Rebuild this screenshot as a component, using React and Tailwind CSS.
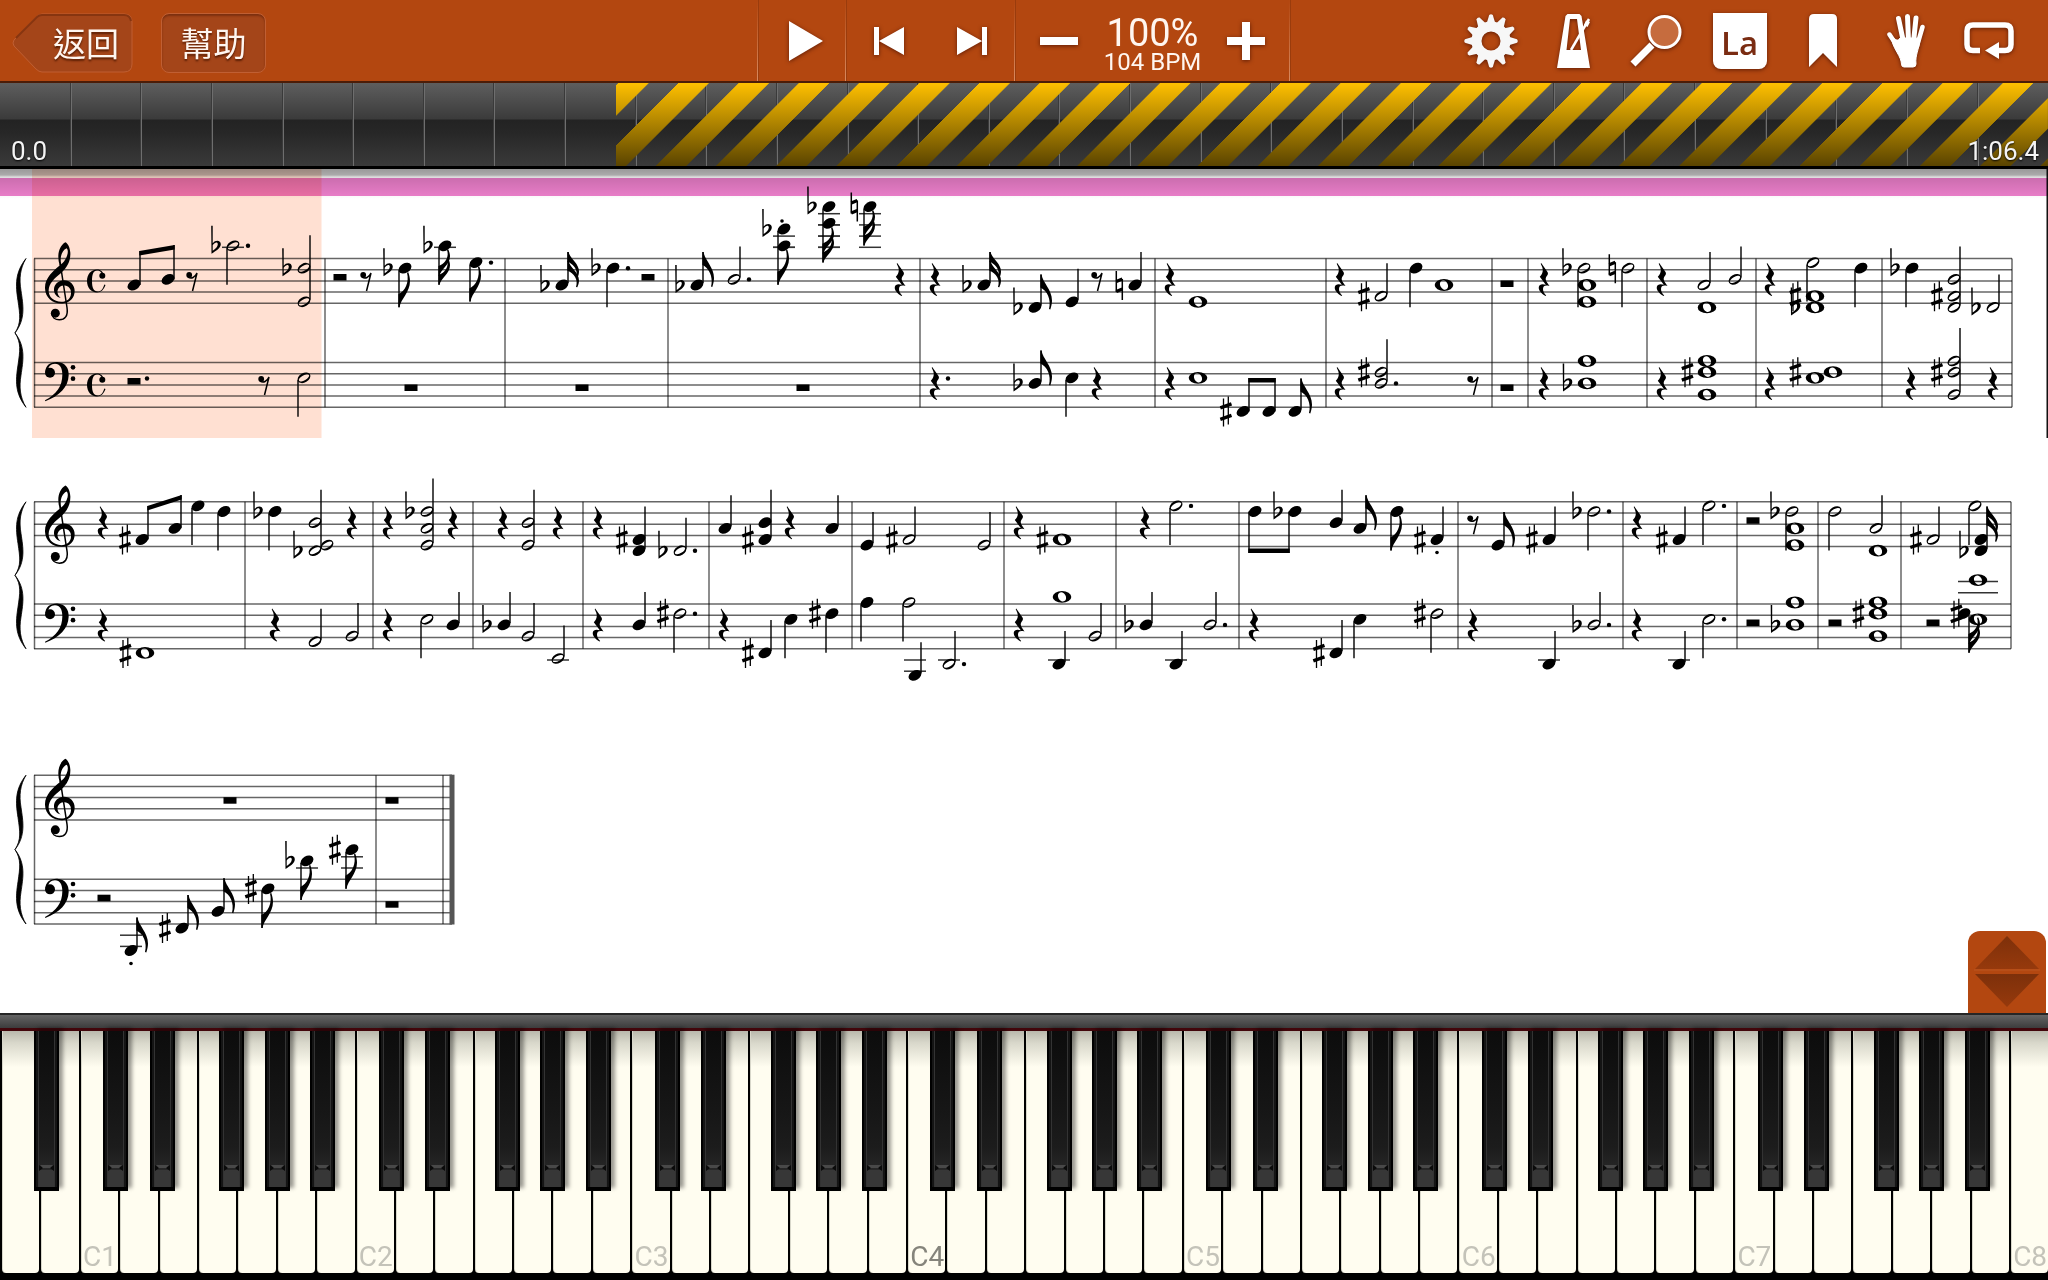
import { useState } from 'react';

// One event per entry: kind, x, steps (0 = top line, 8 = bottom line, with b/#/n), stem, extras
// kinds: w h q e s = whole..sixteenth, o = hollow head, n = solid head, r1 r2 r4 r8 = rests
// extras: . = dotted, ! = staccato above, ? = staccato below, - = stem only
const SYSTEMS = [
  {
    treble: 258.5,
    bass: 362.5,
    end: 2012,
    time: true,
    bars: [325, 505, 668, 920, 1155, 1326, 1492, 1528, 1647, 1756, 1882, 2012],
    trebleEvents:
      'r8 192;h 233 -2b d .;h 304 2b,8 u;' +
      'r2 340;r8 366;e 405 2b d;s 445 -2b d;e 476 1 d .;' +
      's 562 5b u;q 613 2b d .;r2 648;' +
      'e 697 5b u;h 734 4 u .;e 784 -5b,-2 d !;s 829 -9b,-6 d;s 870 -9n d;r4 900;' +
      'r4 935;s 984 5b u;e 1035 9b u;q 1072 8 u;r8 1097;q 1135 5n u;' +
      'r4 1170;w 1198 8;' +
      'r4 1340;h 1381 7# u;q 1416 2 d;w 1444 5;r1 1507;' +
      'r4 1544;h 1584 2b d;w 1587 5,8;h 1628 2n d;' +
      'r4 1662;h 1704 5 u;w 1707 9;h 1735 4 u;' +
      'r4 1770;h 1813 1 d;w 1815 7#,9b;q 1861 2 d;' +
      'q 1912 2b d;h 1954 4,7#,9 u;h 1993 9b u',
    bassEvents:
      'r2 134 .;r8 264;h 304 3 d;r1 411;r1 582;r1 803;' +
      'r4 935 .;e 1035 4b u;q 1072 3 d;r4 1097;' +
      'r4 1170;w 1198 3;e 1295 9 u;' +
      'r4 1340;h 1381 2#,4 u .;r8 1473;r1 1507;' +
      'r4 1544;w 1587 0,4b;r4 1662;w 1707 0,2#,6;' +
      'r4 1770;w 1815 3;w 1833 2;a 1815 2#;' +
      'r4 1911;h 1954 0,2#,6 u;r4 1993',
    beams: [
      { staff: 'treble', notes: [[134, '5'], [168, '4']], up: true, y: [251, 245] },
      { staff: 'bass', notes: [[1243, '9#'], [1269, '9']], up: true, y: [378, 378] },
    ],
  },
  {
    treble: 501.8,
    bass: 604,
    end: 2011,
    bars: [245, 373, 473, 583, 709, 852, 1004, 1116, 1239, 1458, 1623, 1737, 1818, 1901, 2011],
    trebleEvents:
      'r4 103;q 198 1 d;q 224 2 d;' +
      'q 275 2b d;h 315 4,9b u;o 327 8;r4 352;' +
      'r4 388;h 427 2b,5,8 u;r4 453;r4 503;h 528 4,8 u;r4 558;' +
      'r4 598;q 639 7#,9 u;h 680 9b u .;' +
      'q 725 5 u;q 765 4,7# u;r4 790;q 832 5 u;' +
      'q 867 8 u;h 909 7# u;h 984 8 u;r4 1019;w 1062 7#;' +
      'r4 1145;h 1176 1 d .;' +
      'q 1336 4 u;e 1360 5 u;e 1397 2 d;q 1437 7# u ?;' +
      'r8 1473;e 1498 8 u;q 1549 7# u;h 1594 2b d .;' +
      'r4 1637;q 1679 7# u;h 1709 1 d .;' +
      'r2 1753;h 1792 2b d;w 1795 5,8;' +
      'h 1835 2 d;h 1876 5 u;w 1878 9;' +
      'h 1933 7# u;h 1975 1 d;s 1981 7,9b u',
    bassEvents:
      'r4 103;w 145 9#;r4 275;h 315 7 u;h 352 6 u;' +
      'r4 388;h 427 3 d;q 453 4 u;q 504 4b u;h 528 6 u;h 558 10 u;' +
      'r4 598;q 639 4 u;h 680 2# d .;' +
      'r4 724;q 765 9# u;q 791 3 d;q 832 2# d;' +
      'q 867 0 d;h 909 0 d;q 915 13 u;h 949 11 u .;' +
      'r4 1019;w 1062 -1;q 1059 11 u;h 1095 6 u;' +
      'q 1146 4b u;q 1176 11 u;h 1210 4 u .;' +
      'r4 1254;q 1336 9# u;q 1360 3 d;h 1437 2# d;' +
      'r4 1473;q 1549 11 u;h 1594 4b u .;' +
      'r4 1637;q 1679 11 u;h 1709 3 d .;' +
      'r2 1753;w 1795 0,4b;r2 1835;w 1878 0,2#,6;' +
      'r2 1933;w 1978 -4,3;n 1964 2;a 1976 2#;s 1975 2 d -',
    beams: [
      { staff: 'treble', notes: [[142, '7#'], [175, '5']], up: true, y: [506, 495] },
      { staff: 'treble', notes: [[1255, '2'], [1295, '2b']], up: false, y: [553, 553] },
    ],
  },
  {
    treble: 775.2,
    bass: 879.2,
    end: 452,
    final: true,
    bars: [376, 443],
    trebleEvents: 'r1 230;r1 392',
    bassEvents:
      'r2 104;e 131 13 u ?;e 182 9# u;e 218 6 u;e 268 2# d;e 307 -3b d;e 352 -5# d;r1 392',
    beams: [],
  },
];

const HALF_GAP = 5.6;
const HEAD_LIFT = 1.5;

function parseEvents(source) {
  return source.split(';').map((entry) => {
    const [kind, x, ...rest] = entry.split(' ');
    const isRest = kind[0] === 'r';
    const notes = isRest ? [] : rest[0].split(',').map(parseNote);
    const extras = isRest ? rest : rest.slice(1);
    return { kind, x: Number(x), notes, extras };
  });
}

function parseNote(text) {
  const mark = text.match(/[b#n]$/);
  return { step: parseInt(text, 10), accidental: mark ? mark[0] : null };
}

function Accidental({ type, x, y }) {
  return (
    <g transform={`translate(${x} ${y})`}>
      {type === 'b' && (
        <path
          fillRule="evenodd"
          d="M-21.8-20h1.5v17.5C-17.500-6.500-12-5.500-12.200-1.500C-12.400 2.500-17 5-21.500 8ZM-20.300-.5V5C-17.500 3-15.200 1-15.200-1.500C-15.200-4-18-4-20.300-.5Z"
        />
      )}
      {type === '#' && (
        <>
          <path d="M-19.500-13V15M-14.700-15V13" stroke="#000" strokeWidth="1.3" />
          <path d="M-22.700-3.500L-11.500-7.500M-22.700 8L-11.500 4" stroke="#000" strokeWidth="3.4" />
        </>
      )}
      {type === 'n' && (
        <>
          <path d="M-18.700-14V7M-12.700-6V15" stroke="#000" strokeWidth="1.5" />
          <path d="M-18.700-3.500L-12.700-6M-18.700 6.500L-12.700 4" stroke="#000" strokeWidth="3.2" />
        </>
      )}
    </g>
  );
}

function Head({ kind, x, y }) {
  if (kind === 'w') {
    return (
      <path
        transform={`translate(${x} ${y})`}
        fillRule="evenodd"
        d="M-9.300 0a9.300 5.900 0 1 0 18.600 0a9.300 5.900 0 1 0-18.600 0M-2.400-4.200A4.850 3.500 60 1 0 2.400 4.200A4.850 3.500 60 1 0-2.400-4.200"
      />
    );
  }
  if (kind === 'h' || kind === 'o') {
    return (
      <path
        transform={`translate(${x} ${y}) rotate(-30)`}
        fillRule="evenodd"
        d="M-6.900 0a6.900 4.700 0 1 0 13.800 0a6.900 4.700 0 1 0-13.800 0M-5.800 0a5.800 2.500 0 1 0 11.600 0a5.800 2.500 0 1 0-11.600 0"
      />
    );
  }
  return <ellipse transform={`translate(${x} ${y}) rotate(-30)`} rx="6.900" ry="4.800" />;
}

function Rest({ kind, x, top }) {
  if (kind === 'r1') return <rect x={x - 6.5} y={top + 22} width="13" height="6.5" />;
  if (kind === 'r2') return <rect x={x - 6.5} y={top + 15.5} width="13" height="6.5" />;
  if (kind === 'r8') {
    return (
      <g transform={`translate(${x - 6} ${top + 13})`}>
        <circle cx="3.2" cy="3.5" r="2.9" />
        <path
          d="M2 5.6C5.500 7.500 9 6 11 1.500L6.500 19.500"
          fill="none"
          stroke="#000"
          strokeWidth="1.5"
        />
      </g>
    );
  }
  return (
    <path
      transform={`translate(${x - 6} ${top + 4.5})`}
      d="M3.200 0L9.500 9C10.300 10.500 10 11.500 8.800 13C6.800 15.800 7.500 17.500 11.500 23C7.500 21.800 5 22.800 5 26C5 28.500 6.200 30.500 8.200 32.500L7.500 33C3 30.300.3 27 .8 24C1.300 21 4.500 20.600 7.800 21.800L1.800 13.800C5.800 9.500 5.500 6 2.700.8Z"
    />
  );
}

function Flag({ x, y, up, small }) {
  return (
    <path
      transform={`translate(${x} ${y}) scale(1 ${(up ? 1 : -1) * (small ? 0.75 : 1)})`}
      d="M-.6 0H.6C1.500 8 11 15 11 26C11 29 10.300 32 9.300 35L8 34.500C10.500 25 6 16-.6 13Z"
    />
  );
}

function Ledgers({ x, step, top, wide }) {
  const lines = [];
  for (let s = -2; s >= step; s -= 2) lines.push(s);
  for (let s = 10; s <= step; s += 2) lines.push(s);
  const reach = wide ? 20 : 11;
  return lines.map((s) => (
    <path
      key={s}
      d={`M${x - reach} ${top + s * HALF_GAP}h${reach * 2}`}
      stroke="#333"
      strokeWidth="1.5"
    />
  ));
}

function Event({ event, top }) {
  const { kind, x, notes, extras } = event;
  const dotted = extras.includes('.');

  if (kind[0] === 'r') {
    return (
      <>
        <Rest kind={kind} x={x} top={top} />
        {dotted && <circle cx={x + 13} cy={top + 16} r="2.2" />}
      </>
    );
  }

  const yOf = (step) => top + step * HALF_GAP - HEAD_LIFT;
  const steps = notes.map((n) => n.step);
  const high = Math.min(...steps);
  const low = Math.max(...steps);
  const up = extras.includes('u');
  const hasStem = 'hqes'.includes(kind);
  const stemX = up ? x + 6 : x - 6;
  const tip = up ? yOf(high) - 33 : yOf(low) + 39;
  const hasHead = kind !== 'a' && !extras.includes('-');

  return (
    <>
      {notes.map((note) => (
        <g key={note.step}>
          {hasHead && <Ledgers x={x} step={note.step} top={top} wide={kind === 'w'} />}
          {hasHead && <Head kind={kind} x={x} y={yOf(note.step)} />}
          {note.accidental && (
            <Accidental
              type={note.accidental}
              x={kind === 'w' || kind === 'a' ? x - 2.5 : x}
              y={yOf(note.step)}
            />
          )}
        </g>
      ))}
      {hasStem && (
        <path
          d={`M${stemX} ${up ? yOf(low) - 2 : yOf(high) + 2}V${tip}`}
          stroke="#000"
          strokeWidth="1.4"
        />
      )}
      {(kind === 'e' || kind === 's') && <Flag x={stemX} y={tip} up={up} small={kind === 's'} />}
      {kind === 's' && <Flag x={stemX} y={tip + (up ? 9 : -9)} up={up} small />}
      {dotted && <circle cx={x + 15} cy={yOf(low)} r="2.2" />}
      {extras.includes('!') && <circle cx={x - 2} cy={yOf(high) - 8} r="1.8" />}
      {extras.includes('?') && <circle cx={x} cy={yOf(low) + 13} r="1.8" />}
    </>
  );
}

function Beam({ beam, top }) {
  const offset = beam.up ? 6 : -6;
  const thick = beam.up ? 4.5 : -4.5;
  const [a, b] = beam.notes.map(([x]) => x + offset);
  const [ya, yb] = beam.y;
  return (
    <>
      {beam.notes.map(([x, text], i) => {
        const { step, accidental } = parseNote(text);
        const y = top + step * HALF_GAP - HEAD_LIFT;
        return (
          <g key={x}>
            <Head kind="q" x={x} y={y} />
            {accidental && <Accidental type={accidental} x={x} y={y} />}
            <path d={`M${x + offset} ${y}V${beam.y[i]}`} stroke="#000" strokeWidth="1.4" />
          </g>
        );
      })}
      <path d={`M${a - 0.7} ${ya}L${b + 0.7} ${yb}v${thick}L${a - 0.7} ${ya + thick}Z`} />
    </>
  );
}

function TrebleClef({ y }) {
  return (
    <g transform={`translate(45 ${y - 16}) scale(.3333) translate(-135 -27)`}>
      <path
        fillRule="evenodd"
        d="M196 26C176 38 170 66 179 96C160 112 134 134 135 164C136 194 160 212 188 210C210 208 224 194 224 172C224 154 210 140 192 140C174 140 161 154 162 170C163 183 171 190 182 193C174 186 171 178 173 170C176 160 184 155 194 156C206 157 214 166 213 180C212 196 200 205 184 205C160 204 145 190 146 170C147 150 162 136 184 118C202 102 212 82 211 58C210 42 204 30 196 26ZM200 44C207 52 203 68 192 84L184 92C179 76 183 52 200 44Z"
      />
      <path
        d="M181 92L201 222C205 248 194 259 178 259C166 259 156 252 155 240"
        fill="none"
        stroke="#000"
        strokeWidth="4.5"
      />
      <circle cx="166" cy="239" r="13.5" />
    </g>
  );
}

function BassClef({ y }) {
  return (
    <g transform={`translate(45 ${y - 0.5}) scale(.3333) translate(-135 -386)`}>
      <path d="M136 416C136 396 152 385 172 386C196 387 207 405 206 426C205 462 178 488 136 504L135 501C170 482 187 458 187 424C187 404 180 391 165 391C152 391 144 400 144 412Z" />
      <circle cx="150" cy="418" r="15" />
      <circle cx="219" cy="402" r="7" />
      <circle cx="219" cy="436" r="7" />
    </g>
  );
}

function CommonTime({ y }) {
  return (
    <g transform={`translate(87 ${y + 11})`}>
      <path d="M17.500 6C15.500 1.500 13 0 10 0C4 0 0 5 0 11.500C0 18 4 23 10 23C14 23 17 20 18.500 15.500L17.300 15C16 19.500 14 22 11 22C6.500 22 5 18 5 11.500C5 5 6.500 1 10 1C12 1 13 1.500 14 3Z" />
      <circle cx="15.3" cy="6.3" r="3" />
    </g>
  );
}

function Brace({ y, height }) {
  return (
    <path
      transform={`translate(15 ${y}) scale(1 ${height / 148})`}
      d="M11 0C5 10 4 20 6 32C8 46 11 60 0 74C11 88 8 102 6 116C4 128 5 138 11 148C0 134 .5 122 3 106C5 92 6.500 84 0 74C6.500 64 5 56 3 42C.5 26 0 14 11 0Z"
      stroke="#000"
      strokeWidth=".8"
    />
  );
}

function System({ system }) {
  const { treble, bass, end, bars } = system;
  const bottom = bass + 8 * HALF_GAP;
  return (
    <g>
      <Brace y={treble} height={bottom - treble} />
      <g stroke="#000" strokeOpacity=".6" strokeWidth="1.5">
        {[treble, bass].map((top) =>
          [0, 2, 4, 6, 8].map((s) => (
            <path key={`${top}-${s}`} d={`M34 ${top + s * HALF_GAP}H${end}`} />
          ))
        )}
        {[34.5, ...bars].map((x) => (
          <path key={x} d={`M${x} ${treble}V${bottom}`} />
        ))}
      </g>
      {system.final && (
        <rect x="449.5" y={treble - 0.5} width="5" height={bottom - treble + 1} fill="#555" />
      )}
      <TrebleClef y={treble} />
      <BassClef y={bass} />
      {system.time && <CommonTime y={treble} />}
      {system.time && <CommonTime y={bass} />}
      {parseEvents(system.trebleEvents).map((event, i) => (
        <Event key={i} event={event} top={treble} />
      ))}
      {parseEvents(system.bassEvents).map((event, i) => (
        <Event key={i} event={event} top={bass} />
      ))}
      {system.beams.map((beam, i) => (
        <Beam key={i} beam={beam} top={system[beam.staff]} />
      ))}
    </g>
  );
}

function Score() {
  return (
    <main className="relative flex-1 bg-white">
      <svg viewBox="0 169 2048 844" className="block w-full" role="img" aria-label="Score">
        <rect x="32" y="169" width="289.5" height="269" fill="#ffe0d2" />
        {SYSTEMS.map((system) => (
          <System key={system.treble} system={system} />
        ))}
        <rect x="2046.5" y="169" width="1.5" height="269" fill="#111" />
      </svg>
      <div className="absolute inset-x-0 top-[9px] h-[18px] bg-[#ec7fcb] mix-blend-multiply" />
      <div className="absolute inset-x-0 top-0 h-10 bg-[linear-gradient(#0006,#0005_6px,#0002_8px,#0002_10px,#0000_30px)]" />
      <button
        aria-label="Resize keyboard"
        className="absolute right-[2px] bottom-0 w-[78px] h-[82px] rounded-t-xl bg-[#b34710]"
      >
        <svg viewBox="0 0 78 82" className="block w-full h-full">
          <defs>
            <linearGradient id="arrowFill" x1="0" y1="0" x2="0" y2="1">
              <stop offset="0" stopColor="#7d300a" />
              <stop offset="1" stopColor="#96390c" />
            </linearGradient>
          </defs>
          <path d="M39 5L71 38H7Z" fill="url(#arrowFill)" />
          <path d="M7 43H71L39 76Z" fill="url(#arrowFill)" />
          <path d="M6 39H72" stroke="#c2602c" strokeOpacity=".6" />
        </svg>
      </button>
    </main>
  );
}

function IconButton({ label, className = 'w-[83px]', children }) {
  return (
    <button
      aria-label={label}
      className={`flex items-center justify-center h-full text-white drop-shadow-[0_1px_2px_rgba(60,10,0,0.7)] ${className}`}
    >
      {children}
    </button>
  );
}

const GEAR_TEETH = Array.from({ length: 12 }, (_, i) => i * 30);

function GearIcon() {
  return (
    <svg width="54" height="54" viewBox="-27 -27 54 54" fill="#f7f7f7">
      {GEAR_TEETH.map((angle) => (
        <path key={angle} transform={`rotate(${angle})`} d="M-4.500-17L-1.800-26Q0-27.500 1.800-26L4.500-17Z" />
      ))}
      <circle r="14.5" fill="none" stroke="#f7f7f7" strokeWidth="10" />
    </svg>
  );
}

function MetronomeIcon() {
  return (
    <svg width="34" height="54" viewBox="0 0 34 54">
      <path
        fill="#fff"
        fillRule="evenodd"
        d="M10.500 0H22.500L24.500 2L33 54H0L8.500 2ZM13 5L9.500 36H24L20 5Z"
      />
      <path d="M32 5L14 36" stroke="#fff" strokeWidth="2.5" />
      <path d="M29 6.500L33 8L30.500 13L27 11Z" fill="#fff" />
    </svg>
  );
}

function SearchIcon() {
  return (
    <svg width="54" height="54" viewBox="0 0 54 54" fill="none">
      <circle cx="34.5" cy="18" r="15.5" fill="#c66c3e" stroke="#fff" strokeWidth="3" />
      <path d="M22 31L3 50" stroke="#fff" strokeWidth="7" />
    </svg>
  );
}

function HandIcon() {
  return (
    <svg width="38" height="54" viewBox="0 0 38 54" fill="#fff" stroke="#fff" strokeLinecap="round">
      <path d="M2.500 20.500L12 35" strokeWidth="4.5" />
      <path d="M11.500 4.500L16.500 28" strokeWidth="5" />
      <path d="M20.500 2.500L21.500 27" strokeWidth="5" />
      <path d="M29 4L26.500 28" strokeWidth="5" />
      <path d="M35.500 13L30 32" strokeWidth="4.5" />
      <path
        strokeWidth="1"
        d="M5 22C9 27 11 27 13 24L29 24L33 25C32 36 28 41 29 50Q29 53 26 53H17Q14.500 53 14.500 50C14 42 7 36 5 27Z"
      />
    </svg>
  );
}

function RepeatIcon() {
  return (
    <svg width="50" height="38" viewBox="0 0 50 38">
      <path
        d="M16 28.500H9Q3 28.500 3 22.500V9Q3 3 9 3H41Q47 3 47 9V22.500Q47 28.500 41 28.500H34"
        fill="none"
        stroke="#fff"
        strokeWidth="5.5"
      />
      <path d="M21 28.500L35 20V37Z" fill="#fff" />
    </svg>
  );
}

function Divider() {
  return (
    <div className="w-[2px] h-full border-r border-[#9a3c0d] bg-[linear-gradient(#b34710,#d98a60)]" />
  );
}

function Toolbar() {
  const [speed, setSpeed] = useState(100);

  return (
    <header className="grid grid-cols-[1fr_auto_1fr] h-[83px] shrink-0 bg-[#b34710] border-b-2 border-[#4c1d08]">
      <div className="flex items-center gap-7 pt-1 pl-3 text-[33px] leading-none text-[#fff6f0]">
        <button className="relative flex items-center h-[60px] w-[121px] pt-1 pl-[41px] text-shadow-[0_2px_2px_#5a1e04]">
          <svg viewBox="0 0 121 60" className="absolute inset-0 w-full h-full">
            <path
              d="M30 1H112Q120 1 120 9V51Q120 59 112 59H30Q27 59 24 56L2 33Q0 30 2 27L24 4Q27 1 30 1Z"
              fill="#a44519"
              stroke="#c05f33"
            />
            <path d="M4 25L25 4Q27 2 30 2H112Q118 2 119 8" fill="none" stroke="#873510" strokeWidth="2" />
          </svg>
          <span className="relative whitespace-nowrap">返回</span>
        </button>
        <button className="h-[60px] w-[105px] pt-1 rounded-lg border border-[#c05f33] bg-[#a44519] inset-shadow-[0_2px_2px_#7d300f] text-shadow-[0_2px_2px_#5a1e04]">
          幫助
        </button>
      </div>

      <div className="flex h-full">
        <Divider />
        <IconButton label="Play" className="w-[86px]">
          <svg width="34" height="40" viewBox="0 0 34 40" fill="currentColor" className="ml-2">
            <path d="M0 0L34 20L0 40Z" />
          </svg>
        </IconButton>
        <Divider />
        <div className="flex w-[167px]">
          <IconButton label="Previous">
            <svg width="30" height="28" viewBox="0 0 30 28" fill="currentColor">
              <path d="M0 0H5V28H0ZM5 14L30 0V28Z" />
            </svg>
          </IconButton>
          <IconButton label="Next">
            <svg width="30" height="28" viewBox="0 0 30 28" fill="currentColor">
              <path d="M25 0H30V28H25ZM25 14L0 0V28Z" />
            </svg>
          </IconButton>
        </div>
        <Divider />
        <div className="flex items-center w-[273px] text-[#fff6f0]">
          <button
            aria-label="Slower"
            onClick={() => setSpeed(speed - 5)}
            className="flex flex-1 items-center justify-center h-full drop-shadow-[0_1px_2px_rgba(60,10,0,0.7)]"
          >
            <span className="w-[38px] h-2 bg-white" />
          </button>
          <div className="w-[100px] pt-2 text-center whitespace-nowrap">
            <div className="text-[38px] leading-[34px]">{`${speed}%`}</div>
            <div className="text-2xl leading-6">{`${Math.round(speed * 1.04)} BPM`}</div>
          </div>
          <button
            aria-label="Faster"
            onClick={() => setSpeed(speed + 5)}
            className="flex flex-1 items-center justify-center h-full drop-shadow-[0_1px_2px_rgba(60,10,0,0.7)]"
          >
            <svg width="38" height="38" viewBox="0 0 38 38" fill="#fff">
              <path d="M15 0H23V15H38V23H23V38H15V23H0V15H15Z" />
            </svg>
          </button>
        </div>
        <Divider />
      </div>

      <div className="flex justify-end pr-[18px]">
        <IconButton label="Settings"><GearIcon /></IconButton>
        <IconButton label="Metronome"><MetronomeIcon /></IconButton>
        <IconButton label="Zoom"><SearchIcon /></IconButton>
        <IconButton label="Note names">
          <span className="flex items-center justify-center w-[54px] h-14 pt-1 rounded-b-lg bg-white font-['Open_Sans',sans-serif] text-[33px] leading-none font-semibold text-[#7a2c12]">
            La
          </span>
        </IconButton>
        <IconButton label="Bookmark">
          <svg width="28" height="54" viewBox="0 0 28 54" fill="currentColor">
            <path d="M5 0H23Q28 0 28 5V53L14 39L0 53V5Q0 0 5 0Z" />
          </svg>
        </IconButton>
        <IconButton label="Hands"><HandIcon /></IconButton>
        <IconButton label="Repeat"><RepeatIcon /></IconButton>
      </div>
    </header>
  );
}

const MEASURES = Array.from({ length: 29 }, (_, i) => i);

function Timeline() {
  return (
    <div className="relative h-[86px] shrink-0 border-b-[3px] border-black bg-[linear-gradient(#5e5e5e,#3b3b3b_43%,#232323_45%,#272727_60%,#3a3a3a)]">
      <div className="flex h-full">
        {MEASURES.map((m) => (
          <div
            key={m}
            className="flex-1 border-l border-[#6e6e6e] shadow-[-1px_0_0_#3a3a3a] first:border-transparent"
          />
        ))}
      </div>
      <svg className="absolute inset-y-0 right-0 w-[69.92%] h-full">
        <defs>
          <linearGradient id="stripeFade" x1="0" y1="0" x2="0" y2="1">
            <stop offset="0" stopColor="#ffc000" />
            <stop offset="1" stopColor="#5a4400" />
          </linearGradient>
          <pattern
            id="stripes"
            width="60.2"
            height="83"
            patternUnits="userSpaceOnUse"
            patternTransform="translate(2.3 0) skewX(-45)"
          >
            <rect width="30.5" height="83" fill="#fff" />
          </pattern>
          <mask id="stripeMask">
            <rect width="100%" height="100%" fill="url(#stripes)" />
          </mask>
        </defs>
        <rect width="100%" height="100%" fill="url(#stripeFade)" mask="url(#stripeMask)" />
      </svg>
      <div className="absolute inset-x-0 bottom-0 flex justify-between pl-[11px] pr-[9px] text-[26px] leading-[30px] text-[#f4f4f4] text-shadow-[0_1px_2px_#000]">
        <span>0.0</span>
        <span>1:06.4</span>
      </div>
    </div>
  );
}

const NOTE_NAMES = ['A', 'B', 'C', 'D', 'E', 'F', 'G'];

const BLACK_OFFSETS = {
  A: '-right-5',
  C: '-right-[10px]',
  D: '-right-[17px]',
  F: '-right-2',
  G: '-right-[14px]',
};

const WHITE_KEYS = Array.from({ length: 52 }, (_, i) => {
  const name = NOTE_NAMES[i % 7];
  const octave = Math.floor((i + 5) / 7);
  return { name, octave, sharp: i < 51 ? BLACK_OFFSETS[name] : undefined };
});

function BlackKey({ label, position }) {
  return (
    <button
      aria-label={label}
      className={`absolute top-0 z-10 w-[25px] h-40 border-x-2 border-b-4 border-black bg-[#141414] shadow-[4px_-3px_4px_rgba(0,0,0,0.4)] ${position}`}
    >
      <span className="flex flex-col h-full mx-[2px] border-x border-[#333] bg-[linear-gradient(#0c0c0c,#161616_50%,#1c1c1c_75%,#303030)]">
        <svg viewBox="0 0 15 22" className="block w-full h-[22px] mt-auto">
          <path d="M0 5H15V22H0Z" fill="#373737" />
          <path d="M0 0L4 3L0 6ZM15 0L11 3L15 6Z" fill="#0a0a0a" />
          <path d="M1 0H14L11 3H4Z" fill="#484848" />
        </svg>
      </span>
    </button>
  );
}

function Piano() {
  return (
    <section className="shrink-0 bg-black">
      <div className="h-[18px] border-t-2 border-b-[3px] border-t-[#262626] border-b-[#42060b] bg-[linear-gradient(#646464,#3c3c3c)]" />
      <div className="flex h-[242px]">
        {WHITE_KEYS.map(({ name, octave, sharp }) => (
          <div key={name + octave} className="relative flex-1 min-w-0 border-l-2 border-black">
            <button
              aria-label={name + octave}
              className="flex items-end justify-center w-full h-full rounded-b-[4px] border-l border-[#d8d7ca] bg-[linear-gradient(#b9b8ac,#d9d8cb_12px,#fffdf0_36px)] text-[28px] leading-8"
            >
              {name === 'C' && (
                <span className={octave === 4 ? 'text-[#85847b]' : 'text-[#c4c3b9]'}>{`C${octave}`}</span>
              )}
            </button>
            {sharp && <BlackKey label={`${name}#${octave}`} position={sharp} />}
          </div>
        ))}
      </div>
      <div className="h-[7px]" />
    </section>
  );
}

export default function App() {
  return (
    <div className="flex flex-col min-h-screen overflow-hidden bg-white font-['Roboto','Noto_Sans_CJK_TC',sans-serif]">
      <Toolbar />
      <Timeline />
      <Score />
      <Piano />
    </div>
  );
}
